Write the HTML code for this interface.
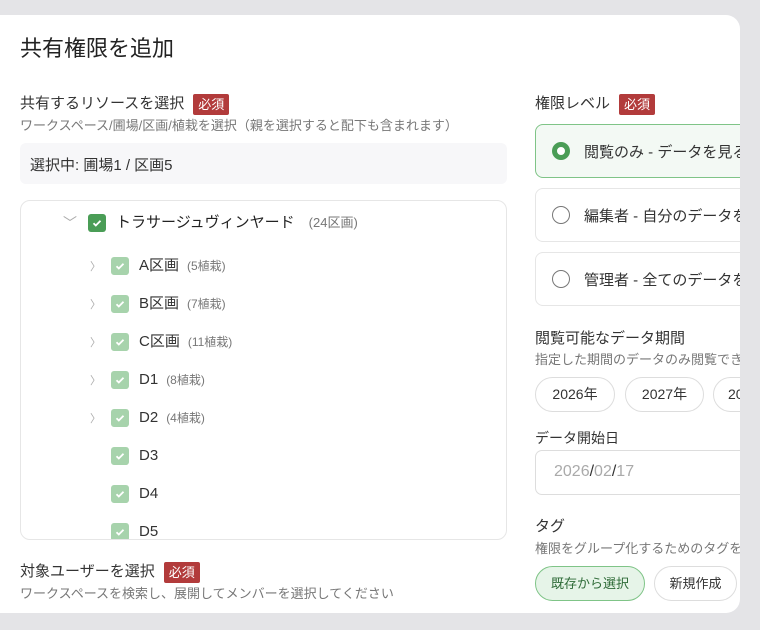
<!DOCTYPE html>
<html><head><meta charset="utf-8"><style>
*{box-sizing:border-box;margin:0;padding:0}
body{width:760px;height:630px;background:#e4e4e7;font-family:"Liberation Sans","Noto Sans CJK JP",sans-serif;color:#222;position:relative;overflow:hidden}
.panel{position:absolute;left:0;top:15px;width:740px;height:598px;background:#fff;border-radius:0 14px 14px 0;overflow:hidden}
.a{position:absolute;white-space:nowrap}
.req{display:inline-block;background:#b23b3b;color:#fff;font-size:13px;padding:0 5px;height:21px;line-height:21px;border-radius:2px;vertical-align:middle;margin-left:9px}
.lbl{font-size:15px;color:#333}
.sub{font-size:13px;color:#777}
.cb{position:absolute;width:18px;height:18px;border-radius:3px;background:#a7d3ac}
.cb svg{position:absolute;left:3px;top:3px}
.chev{position:absolute;font-size:11px;color:#aaa}
.row{position:absolute;left:118px;font-size:15px;color:#333;line-height:20px;white-space:nowrap}
.row span{font-size:12px;color:#777;margin-left:8px}
.radio{position:absolute;left:535px;width:220px;height:54px;border:1px solid #e6e6e6;border-radius:8px}
.radio .c{position:absolute;left:16px;top:17px;width:18px;height:18px;border-radius:50%;border:1.5px solid #777}
.radio .t{position:absolute;left:48px;top:16px;font-size:15px;color:#333}
.pill{position:absolute;top:362px;height:35px;border:1px solid #ddd;border-radius:18px;font-size:14px;line-height:33px;text-align:center;color:#333}
</style></head><body>
<div class="panel">
<div class="a" style="left:20px;top:16px;font-size:22px;color:#222">共有権限を追加</div>

<div class="a lbl" style="left:20px;top:77px">共有するリソースを選択<span class="req">必須</span></div>
<div class="a sub" style="left:20px;top:100px">ワークスペース/圃場/区画/植栽を選択（親を選択すると配下も含まれます）</div>
<div class="a" style="left:20px;top:128px;width:487px;height:41px;background:#f7f7f9;border-radius:6px;font-size:15px;color:#333;padding:11px 10px">選択中: 圃場1 / 区画5</div>

<div class="a" style="left:20px;top:185px;width:487px;height:340px;border:1px solid #e6e6e6;border-radius:10px;overflow:hidden">
 <div class="chev" style="left:42px;top:12px;font-size:14px">﹀</div>
 <div class="cb" style="left:67px;top:13px;background:#4a9d56"><svg width="12" height="12" viewBox="0 0 12 12"><path d="M2.5 6.2l2.3 2.3 4.7-4.8" stroke="#fff" stroke-width="1.8" fill="none"/></svg></div>
 <div class="row" style="left:95px;top:12px;color:#222">トラサージュヴィンヤード<span style="font-size:13px;margin-left:14px">(24区画)</span></div>
 <div class="chev" style="left:69px;top:57px">〉</div>
 <div class="cb" style="left:90px;top:56px"><svg width="12" height="12" viewBox="0 0 12 12"><path d="M2.5 6.2l2.3 2.3 4.7-4.8" stroke="#fff" stroke-width="1.8" fill="none"/></svg></div>
 <div class="row" style="top:55px">A区画<span>(5植栽)</span></div>
 <div class="chev" style="left:69px;top:95px">〉</div>
 <div class="cb" style="left:90px;top:94px"><svg width="12" height="12" viewBox="0 0 12 12"><path d="M2.5 6.2l2.3 2.3 4.7-4.8" stroke="#fff" stroke-width="1.8" fill="none"/></svg></div>
 <div class="row" style="top:93px">B区画<span>(7植栽)</span></div>
 <div class="chev" style="left:69px;top:133px">〉</div>
 <div class="cb" style="left:90px;top:132px"><svg width="12" height="12" viewBox="0 0 12 12"><path d="M2.5 6.2l2.3 2.3 4.7-4.8" stroke="#fff" stroke-width="1.8" fill="none"/></svg></div>
 <div class="row" style="top:131px">C区画<span>(11植栽)</span></div>
 <div class="chev" style="left:69px;top:171px">〉</div>
 <div class="cb" style="left:90px;top:170px"><svg width="12" height="12" viewBox="0 0 12 12"><path d="M2.5 6.2l2.3 2.3 4.7-4.8" stroke="#fff" stroke-width="1.8" fill="none"/></svg></div>
 <div class="row" style="top:169px">D1<span>(8植栽)</span></div>
 <div class="chev" style="left:69px;top:209px">〉</div>
 <div class="cb" style="left:90px;top:208px"><svg width="12" height="12" viewBox="0 0 12 12"><path d="M2.5 6.2l2.3 2.3 4.7-4.8" stroke="#fff" stroke-width="1.8" fill="none"/></svg></div>
 <div class="row" style="top:207px">D2<span>(4植栽)</span></div>
 <div class="cb" style="left:90px;top:246px"><svg width="12" height="12" viewBox="0 0 12 12"><path d="M2.5 6.2l2.3 2.3 4.7-4.8" stroke="#fff" stroke-width="1.8" fill="none"/></svg></div>
 <div class="row" style="top:245px">D3</div>
 <div class="cb" style="left:90px;top:284px"><svg width="12" height="12" viewBox="0 0 12 12"><path d="M2.5 6.2l2.3 2.3 4.7-4.8" stroke="#fff" stroke-width="1.8" fill="none"/></svg></div>
 <div class="row" style="top:283px">D4</div>
 <div class="cb" style="left:90px;top:322px"><svg width="12" height="12" viewBox="0 0 12 12"><path d="M2.5 6.2l2.3 2.3 4.7-4.8" stroke="#fff" stroke-width="1.8" fill="none"/></svg></div>
 <div class="row" style="top:321px">D5</div>
</div>

<div class="a lbl" style="left:20px;top:545px">対象ユーザーを選択<span class="req">必須</span></div>
<div class="a sub" style="left:20px;top:568px">ワークスペースを検索し、展開してメンバーを選択してください</div>

<div class="a lbl" style="left:535px;top:77px">権限レベル<span class="req">必須</span></div>
<div class="radio" style="top:109px;border-color:#7fc487;background:#f3f9f4"><div class="c" style="border:5px solid #4a9d56;background:#fff"></div><div class="t">閲覧のみ - データを見る</div></div>
<div class="radio" style="top:173px"><div class="c"></div><div class="t">編集者 - 自分のデータを</div></div>
<div class="radio" style="top:237px"><div class="c"></div><div class="t">管理者 - 全てのデータを</div></div>

<div class="a" style="left:535px;top:312px;font-size:15px;color:#333">閲覧可能なデータ期間</div>
<div class="a sub" style="left:535px;top:334px">指定した期間のデータのみ閲覧できます</div>
<div class="pill" style="left:535px;width:80px">2026年</div>
<div class="pill" style="left:625px;width:79px">2027年</div>
<div class="pill" style="left:713px;width:79px;text-align:left;padding-left:14px">2028年</div>
<div class="a" style="left:535px;top:413px;font-size:14px;color:#333">データ開始日</div>
<div class="a" style="left:535px;top:435px;width:230px;height:45px;border:1px solid #ddd;border-radius:7px;font-size:16px;color:#aaa;padding:12px 18px">2026<span style="color:#333">/</span>02<span style="color:#333">/</span>17</div>
<div class="a" style="left:535px;top:500px;font-size:15px;color:#333">タグ</div>
<div class="a sub" style="left:535px;top:523px">権限をグループ化するためのタグを作成</div>
<div class="a" style="left:535px;top:551px;width:110px;height:35px;border:1px solid #7fc487;background:#e6f4e8;border-radius:18px;font-size:13px;line-height:33px;text-align:center;color:#2f6b38">既存から選択</div>
<div class="a" style="left:654px;top:551px;width:83px;height:35px;border:1px solid #ddd;border-radius:18px;font-size:13px;line-height:33px;text-align:center;color:#333">新規作成</div>
</div>
</body></html>
